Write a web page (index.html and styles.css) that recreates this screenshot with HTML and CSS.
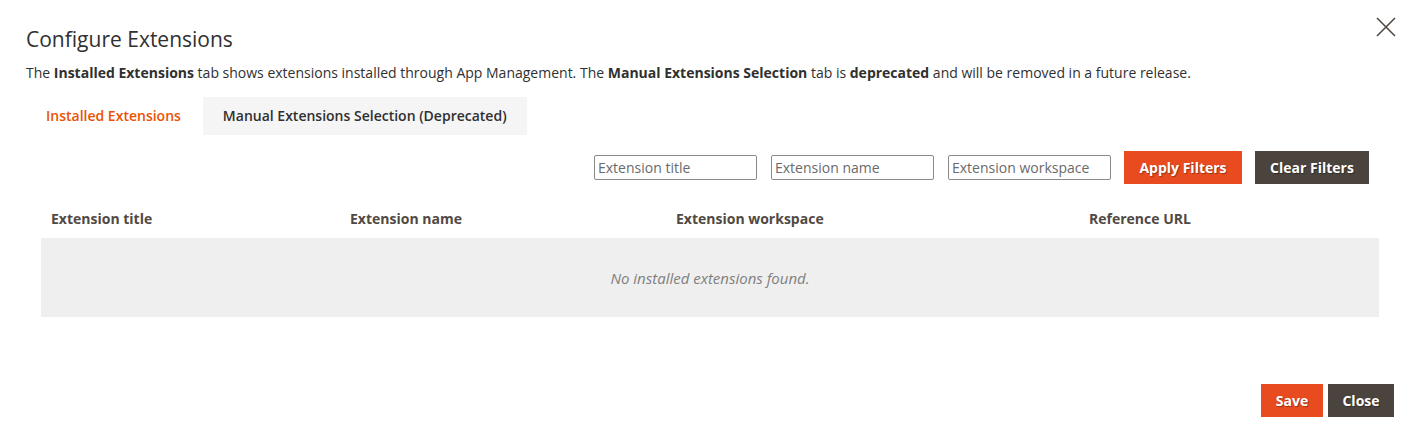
FILE: index.html
```html
<!DOCTYPE html>
<html>
<head>
<meta charset="utf-8">
<link rel="stylesheet" href="styles.css">
</head>
<body>
<div class="modal">
  <header class="modal-header">
    <h1 class="modal-title">Configure Extensions</h1>
    <button class="close-x" aria-label="Close">
      <svg width="20" height="20" viewBox="0 0 20 20"><path d="M1 1 L19 19 M19 1 L1 19" stroke="#514943" stroke-width="1.6" fill="none"/></svg>
    </button>
  </header>
  <p class="desc">The <b>Installed Extensions</b> tab shows extensions installed through App Management. The <b>Manual Extensions Selection</b> tab is <b>deprecated</b> and will be removed in a future release.</p>
  <nav class="tabs">
    <div class="tab active">Installed Extensions</div>
    <div class="tab">Manual Extensions Selection (Deprecated)</div>
  </nav>
  <div class="filters">
    <input class="field" placeholder="Extension title">
    <input class="field" placeholder="Extension name">
    <input class="field" placeholder="Extension workspace">
    <button class="btn primary apply">Apply Filters</button>
    <button class="btn secondary clear">Clear Filters</button>
  </div>
  <table class="grid">
    <thead>
      <tr>
        <th class="c1">Extension title</th>
        <th class="c2">Extension name</th>
        <th class="c3">Extension workspace</th>
        <th class="c4">Reference URL</th>
      </tr>
    </thead>
    <tbody>
      <tr class="empty"><td colspan="4">No installed extensions found.</td></tr>
    </tbody>
  </table>
  <footer class="modal-footer">
    <button class="btn primary save">Save</button>
    <button class="btn secondary close">Close</button>
  </footer>
</div>
</body>
</html>
```
FILE: styles.css
```css
html, body {
  margin: 0;
  padding: 0;
  background: #fff;
}
body {
  font-family: "Open Sans", "Liberation Sans", sans-serif;
  color: #303030;
  width: 1410px;
  height: 444px;
  overflow: hidden;
}
.modal {
  padding: 0 16px 0 26px;
  box-sizing: border-box;
  width: 1410px;
}
.modal-header {
  display: flex;
  justify-content: space-between;
  align-items: flex-start;
}
.modal-title {
  margin: 25px 0 0 0;
  font-size: 21px;
  font-weight: 400;
  line-height: 28px;
  color: #303030;
}
.close-x {
  margin: 17px -2px 0 0;
  padding: 0;
  border: 0;
  background: none;
  width: 20px;
  height: 20px;
  cursor: pointer;
}
.close-x svg { display: block; }
.desc {
  margin: 10px 0 0 0;
  font-size: 14px;
  line-height: 20px;
}
.desc b { font-weight: 700; }
.tabs {
  display: flex;
  margin-top: 14px;
  height: 38px;
}
.tab {
  font-size: 14px;
  font-weight: 600;
  line-height: 38px;
  padding: 0 20px;
  color: #303030;
}
.tab.active {
  color: #eb5202;
  background: #fff;
  padding-right: 22px;
}
.tab:not(.active) {
  background: #f5f5f5;
}
.filters {
  display: flex;
  justify-content: flex-end;
  align-items: center;
  margin-top: 16px;
  padding-right: 25px;
  height: 33px;
}
.field {
  width: 163px;
  height: 25px;
  box-sizing: border-box;
  border: 1px solid #8a8a8a;
  border-radius: 2px;
  padding: 0 3px;
  margin-right: 14px;
  font-family: "Open Sans", "Liberation Sans", sans-serif;
  font-size: 14px;
  color: #303030;
}
.field::placeholder { color: #6a6a6a; }
.btn {
  font-family: "Open Sans", "Liberation Sans", sans-serif;
  font-size: 14px;
  font-weight: 700;
  color: #fff;
  border: 0;
  height: 33px;
  padding: 0;
  text-shadow: 1px 1px 1px rgba(0,0,0,0.35);
  cursor: pointer;
}
.primary { background: #e84b1f; }
.secondary { background: #4b433d; }
.apply { width: 118px; margin-left: -1px; }
.clear { width: 114px; margin-left: 13px; }
.grid {
  margin: 15px 0 0 15px;
  width: 1338px;
  border-collapse: collapse;
  table-layout: fixed;
}
.grid th {
  text-align: left;
  font-size: 14px;
  font-weight: 700;
  color: #514943;
  padding: 0 10px;
  height: 39px;
  vertical-align: middle;
}
.grid .c1 { width: 279px; }
.grid .c2 { width: 306px; }
.grid .c3 { width: 393px; }
.grid .c4 { width: 280px; }
.grid .empty td {
  background: #efefef;
  height: 79px;
  text-align: center;
  font-style: italic;
  font-size: 15px;
  color: #808080;
  padding: 0;
}
.modal-footer {
  display: flex;
  justify-content: flex-end;
  margin-top: 67px;
  gap: 5px;
}
.save { width: 62px; }
.close { width: 66px; }
```
